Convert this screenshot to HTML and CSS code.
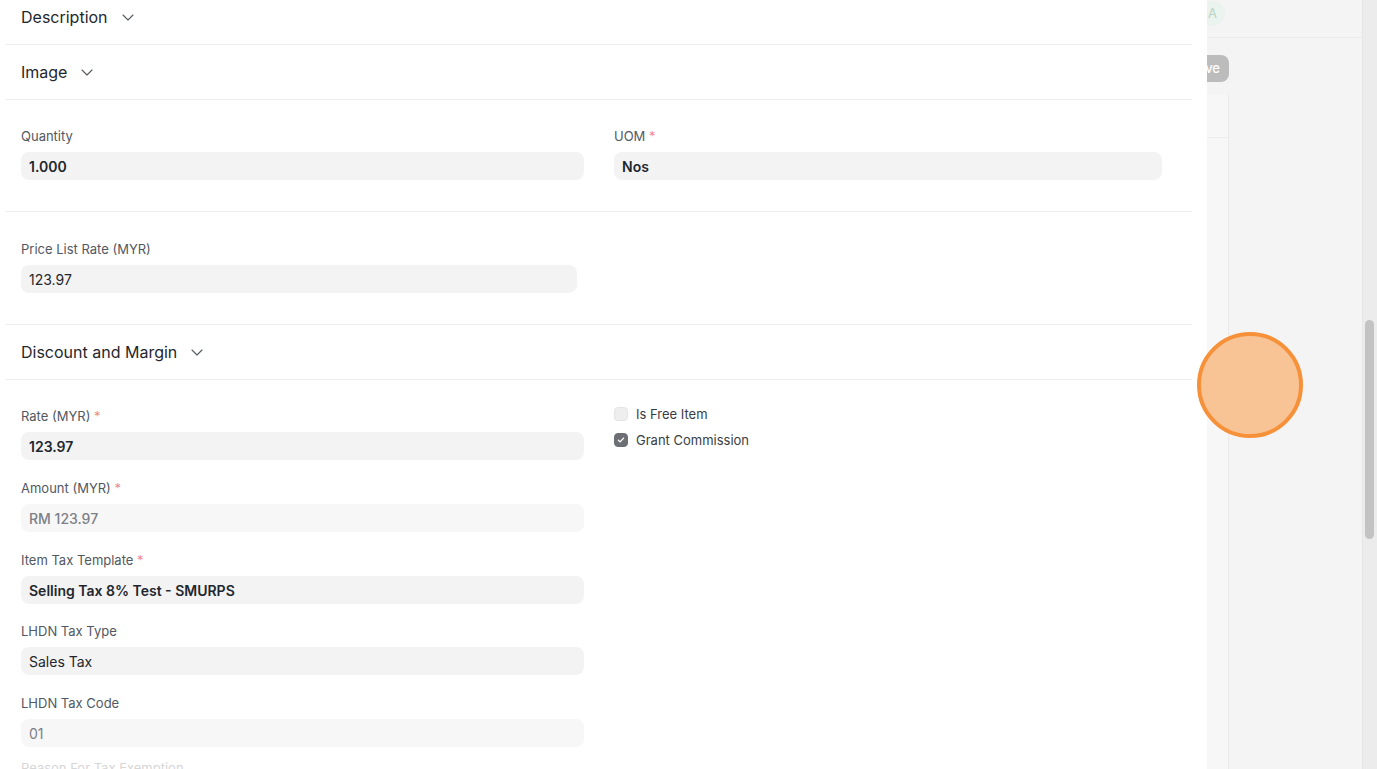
FILE: index.html
```html
<!DOCTYPE html>
<html>
<head>
<meta charset="utf-8">
<link rel="stylesheet" href="styles.css">
</head>
<body>
<div class="screen">
  <div class="modal">
    <div class="form">
      <div class="section head-section">
        <div class="section-head">Description <svg class="chev" viewBox="0 0 12 7"><path d="M1 1l5 5 5-5"/></svg></div>
      </div>
      <div class="section head-section">
        <div class="section-head">Image <svg class="chev" viewBox="0 0 12 7"><path d="M1 1l5 5 5-5"/></svg></div>
      </div>
      <div class="section body-section">
        <div class="cols">
          <div class="col">
            <div class="field">
              <div class="label">Quantity</div>
              <div class="input bold">1.000</div>
            </div>
          </div>
          <div class="col">
            <div class="field">
              <div class="label">UOM <span class="req">*</span></div>
              <div class="input bold narrow">Nos</div>
            </div>
          </div>
        </div>
      </div>
      <div class="section body-section second">
        <div class="cols">
          <div class="col">
            <div class="field">
              <div class="label">Price List Rate (MYR)</div>
              <div class="input short">123.97</div>
            </div>
          </div>
          <div class="col"></div>
        </div>
      </div>
      <div class="section head-section">
        <div class="section-head">Discount and Margin <svg class="chev" viewBox="0 0 12 7"><path d="M1 1l5 5 5-5"/></svg></div>
      </div>
      <div class="section body-section last">
        <div class="cols">
          <div class="col">
            <div class="field">
              <div class="label">Rate (MYR) <span class="req">*</span></div>
              <div class="input bold">123.97</div>
            </div>
            <div class="field">
              <div class="label">Amount (MYR) <span class="req">*</span></div>
              <div class="input readonly medium">RM 123.97</div>
            </div>
            <div class="field">
              <div class="label">Item Tax Template <span class="req">*</span></div>
              <div class="input bold">Selling Tax 8% Test - SMURPS</div>
            </div>
            <div class="field">
              <div class="label">LHDN Tax Type</div>
              <div class="input">Sales Tax</div>
            </div>
            <div class="field tight">
              <div class="label">LHDN Tax Code</div>
              <div class="input readonly">01</div>
            </div>
            <div class="field">
              <div class="label faded">Reason For Tax Exemption</div>
            </div>
          </div>
          <div class="col checks">
            <div class="check">
              <span class="box"></span>
              <span class="check-label">Is Free Item</span>
            </div>
            <div class="check">
              <span class="box on"><svg viewBox="0 0 14 14"><path d="M4 7.2l2 2 4-4.4"/></svg></span>
              <span class="check-label">Grant Commission</span>
            </div>
          </div>
        </div>
      </div>
    </div>
  </div>
  <div class="backdrop">
    <div class="topbar"></div>
    <div class="avatar">A</div>
    <div class="save-btn">Save</div>
    <div class="side-card"><div class="side-row"></div></div>
  </div>
  <div class="scrollbar"><div class="thumb"></div></div>
  <div class="cursor-dot"></div>
</div>
</body>
</html>
```

FILE: styles.css
```css
* { box-sizing: border-box; }
html, body { margin: 0; padding: 0; }
body {
  width: 1377px;
  height: 769px;
  overflow: hidden;
  background: #f4f4f4;
  font-family: Inter, "Noto Sans", sans-serif;
  color: #1f272e;
}
.screen {
  position: relative;
  display: flex;
  width: 1377px;
  height: 769px;
  overflow: hidden;
}
.modal {
  position: relative;
  z-index: 2;
  width: 1207px;
  flex: none;
  background: #ffffff;
  padding: 0 15px 0 6px;
  overflow: hidden;
}
.form { margin-top: -10px; }
.section { border-bottom: 1px solid #ededed; }
.head-section { padding: 15px 15px; }
.section-head {
  display: flex;
  align-items: center;
  gap: 14px;
  font-size: 16px;
  line-height: 24px;
  font-weight: 400;
  color: #1f272e;
}
.chev {
  width: 12px;
  height: 7px;
  fill: none;
  stroke: #555a60;
  stroke-width: 1.1;
  stroke-linecap: round;
  stroke-linejoin: round;
}
.body-section { padding: 27px 15px 12px; }
.body-section.second { padding-top: 28px; }
.body-section.last { padding-top: 27px; border-bottom: none; }
.cols {
  display: grid;
  grid-template-columns: 563px 563px;
  column-gap: 30px;
}
.field { margin-bottom: 19px; }
.last .field { margin-bottom: 18.75px; }
.last .field.tight { margin-bottom: 12px; }
.label {
  font-size: 13px;
  line-height: 18px;
  color: #525861;
  margin-bottom: 7px;
}
.label.faded { color: #d6d6d6; }
.req { color: #ec8c8c; }
.input {
  height: 28px;
  border-radius: 8px;
  background: #f3f3f3;
  padding: 0 8px;
  font-size: 14px;
  line-height: 29px;
  color: #1f272e;
  overflow: hidden;
}
.input.bold { font-weight: 600; }
.input.medium { font-weight: 500; }
.input.narrow { width: 548px; }
.input.short { width: 556px; }
.input.readonly { background: #f7f7f7; color: #7c8087; }
.check {
  display: flex;
  align-items: center;
  height: 18px;
  margin-bottom: 8px;
  margin-top: -2px;
}
.check + .check { margin-top: 0; }
.box {
  width: 14px;
  height: 14px;
  border-radius: 4px;
  background: #eeeeee;
  border: 1px solid #e4e4e4;
  flex: none;
  display: flex;
}
.box.on { background: #6c6f73; border-color: #6c6f73; }
.box svg {
  width: 12px;
  height: 12px;
  fill: none;
  stroke: #ffffff;
  stroke-width: 1.6;
  stroke-linecap: round;
  stroke-linejoin: round;
}
.check-label {
  margin-left: 8px;
  font-size: 13px;
  line-height: 18px;
  color: #383d43;
}
.backdrop {
  position: relative;
  flex: 1;
  background: #f4f4f4;
}
.topbar {
  height: 38px;
  border-bottom: 1px solid #ebebeb;
}
.avatar {
  position: absolute;
  left: -7px;
  top: 1px;
  width: 25px;
  height: 25px;
  border-radius: 50%;
  background: #eaf3ed;
  color: #bcd5c3;
  font-size: 13px;
  line-height: 25px;
  text-align: center;
}
.save-btn {
  position: absolute;
  left: -28px;
  top: 55px;
  width: 50px;
  height: 27px;
  border-radius: 8px;
  background: #bcbcbc;
  color: #ffffff;
  font-size: 13px;
  font-weight: 500;
  line-height: 27px;
  text-align: right;
  padding-right: 9px;
}
.side-card {
  position: absolute;
  left: 0;
  top: 95px;
  width: 22px;
  height: 700px;
  background: #f7f7f7;
  border-right: 1px solid #ebebeb;
}
.side-row {
  height: 43px;
  border-bottom: 1px solid #ececec;
}
.scrollbar {
  position: relative;
  width: 15px;
  flex: none;
  background: #ececec;
  border-left: 1px solid #e6e6e6;
}
.thumb {
  position: absolute;
  left: 2px;
  top: 320px;
  width: 9px;
  height: 219px;
  border-radius: 5px;
  background: #c3c3c3;
}
.cursor-dot {
  position: absolute;
  z-index: 5;
  left: 1197px;
  top: 332px;
  width: 106px;
  height: 106px;
  border-radius: 50%;
  background: #f8c496;
  border: 4px solid #f6913a;
}
```
